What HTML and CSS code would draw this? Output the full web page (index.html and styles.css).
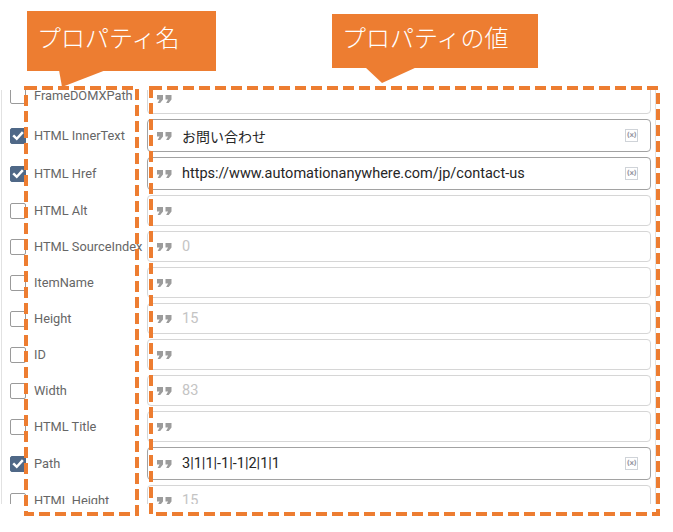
FILE: index.html
```html
<!DOCTYPE html>
<html lang="ja">
<head>
<meta charset="utf-8">
<link rel="stylesheet" href="styles.css">
</head>
<body>
<div class="page">
  <div class="viewport">
    <div class="list">
      <div class="row first">
        <span class="cb"></span><span class="label">FrameDOMXPath</span>
        <div class="field"><svg class="q" viewBox="0 0 15 8"><path d="M0 0H6V4.5L3.2 8H0.6L2.6 4.5H0Z M8.5 0H14.5V4.5L11.7 8H9.1L11.1 4.5H8.5Z"/></svg></div>
      </div>
      <div class="row">
        <span class="cb on"><svg viewBox="0 0 16 16"><path d="M3.5 8.2L6.6 11.2L12.6 4.6"/></svg></span><span class="label">HTML InnerText</span>
        <div class="field filled"><svg class="q" viewBox="0 0 15 8"><path d="M0 0H6V4.5L3.2 8H0.6L2.6 4.5H0Z M8.5 0H14.5V4.5L11.7 8H9.1L11.1 4.5H8.5Z"/></svg><span class="val jp">お問い合わせ</span><span class="var">(x)</span></div>
      </div>
      <div class="row">
        <span class="cb on"><svg viewBox="0 0 16 16"><path d="M3.5 8.2L6.6 11.2L12.6 4.6"/></svg></span><span class="label">HTML Href</span>
        <div class="field filled"><svg class="q" viewBox="0 0 15 8"><path d="M0 0H6V4.5L3.2 8H0.6L2.6 4.5H0Z M8.5 0H14.5V4.5L11.7 8H9.1L11.1 4.5H8.5Z"/></svg><span class="val">https://www.automationanywhere.com/jp/contact-us</span><span class="var">(x)</span></div>
      </div>
      <div class="row">
        <span class="cb"></span><span class="label">HTML Alt</span>
        <div class="field"><svg class="q" viewBox="0 0 15 8"><path d="M0 0H6V4.5L3.2 8H0.6L2.6 4.5H0Z M8.5 0H14.5V4.5L11.7 8H9.1L11.1 4.5H8.5Z"/></svg></div>
      </div>
      <div class="row">
        <span class="cb"></span><span class="label">HTML SourceIndex</span>
        <div class="field"><svg class="q" viewBox="0 0 15 8"><path d="M0 0H6V4.5L3.2 8H0.6L2.6 4.5H0Z M8.5 0H14.5V4.5L11.7 8H9.1L11.1 4.5H8.5Z"/></svg><span class="val dim">0</span></div>
      </div>
      <div class="row">
        <span class="cb"></span><span class="label">ItemName</span>
        <div class="field"><svg class="q" viewBox="0 0 15 8"><path d="M0 0H6V4.5L3.2 8H0.6L2.6 4.5H0Z M8.5 0H14.5V4.5L11.7 8H9.1L11.1 4.5H8.5Z"/></svg></div>
      </div>
      <div class="row">
        <span class="cb"></span><span class="label">Height</span>
        <div class="field"><svg class="q" viewBox="0 0 15 8"><path d="M0 0H6V4.5L3.2 8H0.6L2.6 4.5H0Z M8.5 0H14.5V4.5L11.7 8H9.1L11.1 4.5H8.5Z"/></svg><span class="val dim">15</span></div>
      </div>
      <div class="row">
        <span class="cb"></span><span class="label">ID</span>
        <div class="field"><svg class="q" viewBox="0 0 15 8"><path d="M0 0H6V4.5L3.2 8H0.6L2.6 4.5H0Z M8.5 0H14.5V4.5L11.7 8H9.1L11.1 4.5H8.5Z"/></svg></div>
      </div>
      <div class="row">
        <span class="cb"></span><span class="label">Width</span>
        <div class="field"><svg class="q" viewBox="0 0 15 8"><path d="M0 0H6V4.5L3.2 8H0.6L2.6 4.5H0Z M8.5 0H14.5V4.5L11.7 8H9.1L11.1 4.5H8.5Z"/></svg><span class="val dim">83</span></div>
      </div>
      <div class="row">
        <span class="cb"></span><span class="label">HTML Title</span>
        <div class="field"><svg class="q" viewBox="0 0 15 8"><path d="M0 0H6V4.5L3.2 8H0.6L2.6 4.5H0Z M8.5 0H14.5V4.5L11.7 8H9.1L11.1 4.5H8.5Z"/></svg></div>
      </div>
      <div class="row">
        <span class="cb on"><svg viewBox="0 0 16 16"><path d="M3.5 8.2L6.6 11.2L12.6 4.6"/></svg></span><span class="label">Path</span>
        <div class="field filled"><svg class="q" viewBox="0 0 15 8"><path d="M0 0H6V4.5L3.2 8H0.6L2.6 4.5H0Z M8.5 0H14.5V4.5L11.7 8H9.1L11.1 4.5H8.5Z"/></svg><span class="val">3|1|1|-1|-1|2|1|1</span><span class="var">(x)</span></div>
      </div>
      <div class="row">
        <span class="cb"></span><span class="label">HTML Height</span>
        <div class="field"><svg class="q" viewBox="0 0 15 8"><path d="M0 0H6V4.5L3.2 8H0.6L2.6 4.5H0Z M8.5 0H14.5V4.5L11.7 8H9.1L11.1 4.5H8.5Z"/></svg><span class="val dim">15</span></div>
      </div>
    </div>
  </div>

  <svg class="annot" viewBox="0 0 673 532" width="673" height="532">
    <polygon class="ptr" points="59,70 106,70 62,87"/>
    <polygon class="ptr" points="365,67 417,67 382,83"/>
    <rect class="dash" x="26" y="88" width="111" height="426"/>
    <rect class="dash" x="151" y="88" width="507" height="426"/>
  </svg>
  <div class="callout c1">プロパティ名</div>
  <div class="callout c2">プロパティの値</div>
</div>
</body>
</html>
```
FILE: styles.css
```css
html, body {
  margin: 0;
  padding: 0;
  background: #fff;
}
.page {
  position: relative;
  width: 673px;
  height: 532px;
  overflow: hidden;
  font-family: Roboto, "Noto Sans", "Noto Sans CJK JP", sans-serif;
}
.viewport {
  margin: 90px 0 0 1px;
  width: 653px;
  height: 414px;
  border-left: 1px solid #e2e2e2;
  border-right: 1px solid #e2e2e2;
  overflow: hidden;
}
.list {
  margin-top: -7px;
  display: flex;
  flex-direction: column;
  gap: 5px;
}
.row {
  display: flex;
  align-items: center;
  padding-left: 8px;
}
.row.first .cb,
.row.first .label {
  position: relative;
  top: -3px;
}
.cb {
  flex: 0 0 16px;
  width: 16px;
  height: 16px;
  box-sizing: border-box;
  border: 1px solid #9a9a9a;
  border-radius: 2px;
  background: #fff;
  margin-right: 8px;
  display: flex;
}
.cb.on {
  background: #4f6887;
  border-color: #4f6887;
}
.cb svg {
  width: 14px;
  height: 14px;
}
.cb svg path {
  fill: none;
  stroke: #fff;
  stroke-width: 2.8;
  stroke-linecap: square;
}
.label {
  flex: 0 0 113px;
  font-size: 12.8px;
  color: #666;
  white-space: nowrap;
  overflow: hidden;
}
.field {
  flex: 0 0 504px;
  box-sizing: border-box;
  height: 31px;
  border: 1px solid #d6d6d6;
  border-radius: 4px;
  display: flex;
  align-items: center;
  padding: 0 12px 0 9px;
}
.field.filled {
  height: 33px;
  border-color: #a2a2a2;
}
.q {
  flex: 0 0 15px;
  width: 15px;
  height: 8px;
  margin-right: 10px;
}
.q path {
  fill: #9c9c9c;
}
.val {
  flex: 1;
  font-size: 14.5px;
  color: #262626;
  white-space: nowrap;
  font-family: Roboto, "Noto Sans CJK JP", sans-serif;
}
.val.jp {
  font-size: 14px;
}
.val.dim {
  color: #c4c4c4;
}
.var {
  flex: 0 0 13px;
  width: 13px;
  height: 13px;
  box-sizing: border-box;
  border: 1px solid #cfd3d8;
  font-size: 7px;
  line-height: 11px;
  text-align: center;
  color: #9a9aa6;
  font-weight: bold;
  font-family: "DejaVu Sans", sans-serif;
  letter-spacing: -0.5px;
}
.annot {
  position: absolute;
  left: 0;
  top: 0;
  pointer-events: none;
}
.ptr {
  fill: #ed7d31;
}
.dash {
  fill: none;
  stroke: #ed7d31;
  stroke-width: 4;
  stroke-dasharray: 11 5;
}
.callout {
  position: absolute;
  box-sizing: border-box;
  background: #ed7d31;
  color: #fff;
  font-family: "Noto Sans CJK JP", sans-serif;
  font-weight: 300;
  font-size: 24px;
  line-height: 24px;
  padding-left: 10px;
  white-space: nowrap;
}
.c1 {
  left: 27px;
  top: 11px;
  width: 189px;
  height: 60px;
  padding-top: 14px;
}
.c2 {
  left: 332px;
  top: 14px;
  width: 206px;
  height: 54px;
  padding-top: 11px;
}
```
